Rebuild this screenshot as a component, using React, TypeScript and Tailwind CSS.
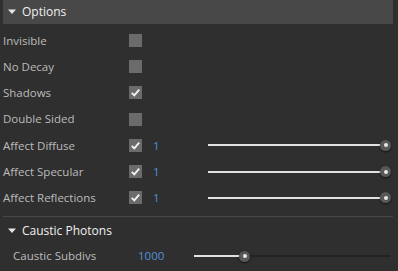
import React from "react";

const font = { fontFamily: '"Open Sans", "Noto Sans", sans-serif' };

const rows = [
  { label: "Invisible", checked: false },
  { label: "No Decay", checked: false },
  { label: "Shadows", checked: true },
  { label: "Double Sided", checked: false },
  { label: "Affect Diffuse", checked: true, value: "1" },
  { label: "Affect Specular", checked: true, value: "1" },
  { label: "Affect Reflections", checked: true, value: "1" },
];

const Caret = () => (
  <svg width="8" height="6" viewBox="0 0 8 6" className="shrink-0">
    <path d="M0 0.5 L8 0.5 L4 5 Z" fill="#e6e6e6" />
  </svg>
);

const Checkbox = ({ checked }: { checked: boolean }) => (
  <div className="w-[13px] h-[13px] bg-[#6b6b6b] flex items-center justify-center shrink-0">
    {checked && (
      <svg width="11" height="11" viewBox="0 0 11 11">
        <path d="M1.8 5.8 L4.3 8.3 L9.2 2.6" stroke="#f2f2f2" strokeWidth="1.9" fill="none" />
      </svg>
    )}
  </div>
);

const Thumb = () => (
  <div className="w-[11px] h-[11px] rounded-full bg-[#585858] shadow-[0_1px_2px_rgba(0,0,0,0.6)] flex items-center justify-center">
    <div className="w-[4px] h-[4px] rounded-full bg-[#e8e8e8]" />
  </div>
);

export default function App() {
  return (
    <div className="w-[398px] h-[271px] bg-[#2f2f2f] overflow-hidden text-[11.5px]" style={font}>
      <div className="ml-[3px] w-[390px] h-[24px] bg-[#484848] flex items-center gap-[6px] pl-[5px] text-[12px] text-[#f0f0f0]">
        <Caret />
        <span>Options</span>
      </div>
      <div className="pt-[3px]">
        {rows.map((r) => (
          <div key={r.label} className="h-[26.3px] flex items-center">
            <span className="w-[129px] shrink-0 pl-[3px] text-[#bcbcbc]">{r.label}</span>
            <Checkbox checked={r.checked} />
            {r.value && (
              <>
                <span className="ml-[11px] text-[#4f8fd8] w-[55px] shrink-0">{r.value}</span>
                <div className="relative w-[183px] h-[11px] flex items-center shrink-0">
                  <div className="h-[2px] w-[177px] bg-[#e2e2e2]" />
                  <div className="absolute right-0 top-0">
                    <Thumb />
                  </div>
                </div>
              </>
            )}
          </div>
        ))}
      </div>
      <div className="mt-[5px] ml-[3px] w-[390px] h-px bg-[#474747]" />
      <div className="h-[27px] flex items-center gap-[6px] pl-[8px] text-[12px] text-[#f0f0f0]">
        <Caret />
        <span>Caustic Photons</span>
      </div>
      <div className="h-[24px] flex items-center">
        <span className="w-[138px] shrink-0 pl-[13px] text-[#bcbcbc]">Caustic Subdivs</span>
        <span className="w-[56px] shrink-0 text-[#4f8fd8]">1000</span>
        <div className="relative w-[196px] h-[11px] flex items-center shrink-0">
          <div className="h-[2px] w-[51px] bg-[#e2e2e2]" />
          <div className="h-[2px] flex-1 bg-[#222222]" />
          <div className="absolute left-[45px] top-0">
            <Thumb />
          </div>
        </div>
      </div>
    </div>
  );
}
